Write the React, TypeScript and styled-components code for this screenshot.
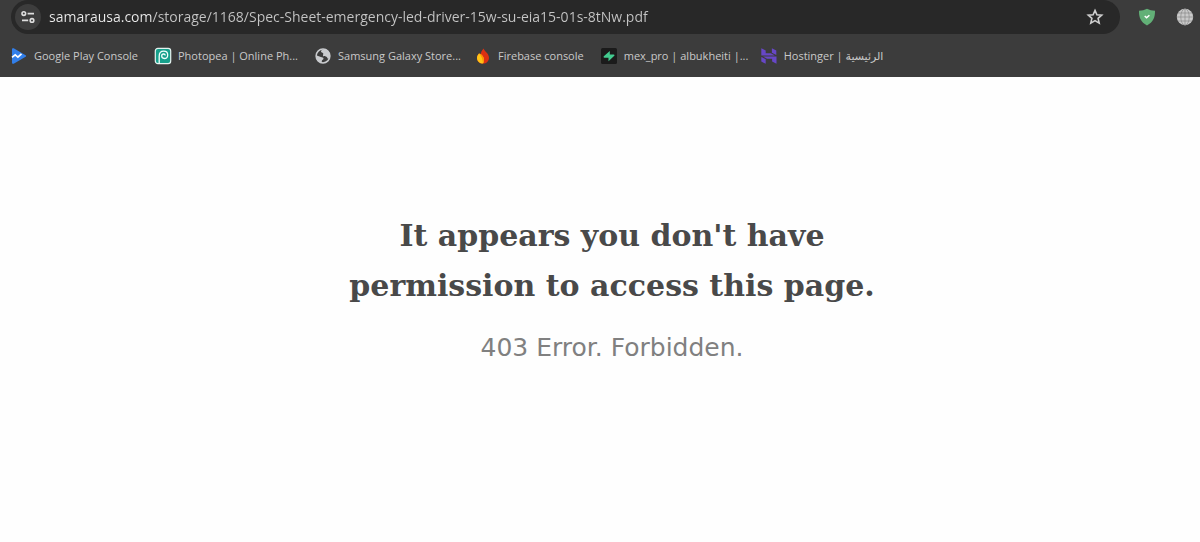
import React from "react";
import styled, { createGlobalStyle } from "styled-components";

const GlobalStyle = createGlobalStyle`
  * { box-sizing: border-box; }
  body { margin: 0; background: #fefefe; }
`;

const uiFont = `"Open Sans", "Noto Sans", "DejaVu Sans", sans-serif`;

const Chrome = styled.header`
  background: #3c3c3c;
  font-family: ${uiFont};
  padding-bottom: 9px;
`;

const Toolbar = styled.div`
  display: flex;
  align-items: center;
  padding-left: 11px;
  padding-right: 5px;
`;

const AddressBar = styled.form`
  flex: 1;
  min-width: 0;
  display: flex;
  align-items: center;
  height: 34px;
  padding: 0 16px 0 4px;
  border-radius: 17px;
  background: #282828;
`;

const IconButton = styled.button<{ $size: number; $fill?: string }>`
  display: grid;
  place-items: center;
  flex: none;
  width: ${(p) => p.$size}px;
  height: ${(p) => p.$size}px;
  padding: 0;
  border: 0;
  border-radius: 50%;
  background: ${(p) => p.$fill ?? "transparent"};
  cursor: pointer;
`;

const UrlInput = styled.input`
  flex: 1;
  min-width: 0;
  height: 24px;
  margin-left: 8px;
  padding: 0;
  border: 0;
  outline: 0;
  font: 14px/24px ${uiFont};
  color: transparent;
  background: linear-gradient(90deg, #ededed 103px, #c6c6c6 103px);
  background-clip: text;
  -webkit-background-clip: text;
  caret-color: #ededed;
`;

const Extensions = styled.div`
  display: flex;
  gap: 18px;
  margin-left: 17px;
`;

const Bookmarks = styled.nav`
  display: flex;
  align-items: center;
  height: 34px;
  padding: 9px 0 0 10px;
  gap: 16px;
`;

const Bookmark = styled.a<{ $truncated?: boolean }>`
  display: flex;
  align-items: center;
  gap: 6px;
  flex: none;
  width: ${(p) => (p.$truncated ? "144px" : "auto")};
  height: 24px;
  font-size: 11px;
  line-height: 24px;
  white-space: nowrap;
  color: #c9c9c9;
  text-decoration: none;
  svg { flex: none; }
`;

const Message = styled.main`
  padding: 134px 0 0 24px;
  text-align: center;
`;

const Title = styled.h1`
  max-width: 600px;
  margin: 0 auto;
  font: bold 30px/50px "DejaVu Serif", serif;
  color: #494949;
`;

const Detail = styled.p`
  margin: 17px 0 0;
  font: 25px/40px "DejaVu Sans", sans-serif;
  color: #808080;
`;

const TuneIcon = () => (
  <svg width="14" height="14" viewBox="0 0 14 14" fill="none" stroke="#dedede" strokeWidth="1.6">
    <circle cx="2.8" cy="3.6" r="1.8" />
    <path d="M6.6 3.6H13M1 10.4h6.2" />
    <circle cx="11" cy="10.4" r="1.8" />
  </svg>
);

const StarIcon = () => (
  <svg width="18" height="18" viewBox="0 0 18 18" fill="none" stroke="#cfcfcf" strokeWidth="1.6">
    <path d="M9 2.4l1.9 4.4 4.8.4-3.6 3.2 1.1 4.7L9 12.6l-4.2 2.5 1.1-4.7-3.6-3.2 4.8-.4z" />
  </svg>
);

const ShieldIcon = () => (
  <svg width="18" height="18" viewBox="0 0 18 18">
    <path d="M9 .8c2.400 1.200 5 1.800 8 2 .2 6.500-1.800 11.500-8 14.600C2.800 14.300.8 9.300 1 2.800c3-.2 5.600-.8 8-2z" fill="#62b077" />
    <path d="M6.700 8l1.900 1.800 2.800-2.600" fill="none" stroke="#fff" strokeWidth="1.500" />
  </svg>
);

const GridGlobeIcon = () => (
  <svg width="18" height="18" viewBox="0 0 18 18">
    <circle cx="9" cy="9" r="8.200" fill="#cacaca" />
    <g fill="none" stroke="#8a8a8a" strokeWidth=".7">
      <path d="M9 1v16M1 9h16M2 5h14M2 13h14" />
      <ellipse cx="9" cy="9" rx="4.200" ry="8.200" />
    </g>
  </svg>
);

const PlayConsoleIcon = () => (
  <svg width="18" height="18" viewBox="0 0 18 18">
    <path d="M2 2.200c0-.9.900-1.300 1.700-.9L15.600 8.200c.7.400.7 1.200 0 1.600L3.700 16.700c-.8.400-1.700 0-1.700-.9z" fill="#327fea" />
    <path d="M2 10.300l3.200-2.500 2.700 2.400 3.600-3.400" fill="none" stroke="#fff" strokeWidth="1.700" />
  </svg>
);

const PhotopeaIcon = () => (
  <svg width="18" height="18" viewBox="0 0 18 18">
    <rect x="1.300" y="1.300" width="15.400" height="15.400" rx="2.600" fill="#16a08b" stroke="#e4f3f0" strokeWidth="1.200" />
    <path d="M5.200 16.400V9.200C5.200 6 7.300 4.200 9.700 4.200c2.300 0 4 1.600 4 3.800 0 2.100-1.500 3.500-3.400 3.500-1.500 0-2.600-1-2.600-2.400 0-1.200.9-2.100 2-2.100.9 0 1.500.600 1.500 1.400" fill="none" stroke="#f2fffc" strokeWidth="1.300" />
  </svg>
);

const GlobeIcon = () => (
  <svg width="18" height="18" viewBox="0 0 18 18">
    <circle cx="9" cy="9" r="6.900" fill="#3c3c3c" stroke="#c9cbce" strokeWidth="1.500" />
    <path d="M2.200 8.200l4.600 1.700c1.300.5 2.600.3 2.700 1.500.1 1.300-1.600 1.300-1.700 2.600l-.2 1.900C4.500 15.300 2 12.500 2.200 8.200z" fill="#c9cbce" />
    <path d="M10.300 2c-2 .5-3.400 1.300-3.300 2.600.1 1.300 2 .9 2.300 2 .2 1-.8 1.400-.1 2.300.8 1 2.300.2 3.300.9.900.6.600 1.700 1.700 2 1.200.2 1.800-1.400 1.800-2.800C16 5.300 13.600 2.600 10.300 2z" fill="#c9cbce" />
  </svg>
);

const FirebaseIcon = () => (
  <svg width="18" height="18" viewBox="0 0 18 18">
    <path d="M9.700 1.500c.4 2.500 5.300 5 5.300 9.200 0 3.400-2.600 5.900-6 5.900s-6-2.500-6-5.600c0-1.900.8-3.300 2-4.400.5.8 1 1.200 1.700 1.400C6.700 5.500 7.700 3.200 9.700 1.500z" fill="#dc3012" />
    <path d="M5 6.600c3 1 5.200 3.700 4.900 7.300-.1 1.100-.4 2-.9 2.700-3.400 0-6-2.500-6-5.600 0-1.900.8-3.300 2-4.400z" fill="#ffc417" />
    <path d="M5 6.600c3.400.500 6.600 4.600 4 10-.3-4.300-1.200-7.200-4-10z" fill="#ff9100" />
  </svg>
);

const SupabaseIcon = () => (
  <svg width="18" height="18" viewBox="0 0 18 18">
    <rect x="1" y="1" width="16" height="16" rx="1.500" fill="#1b1b1b" />
    <path d="M9.800 4.100v3.300h3.900c.8 0 1.100.8.6 1.400l-5.800 5.400v-3.500H4.400c-.8 0-1.100-.8-.6-1.400z" fill="#43cb8f" />
  </svg>
);

const HostingerIcon = () => (
  <svg width="18" height="18" viewBox="0 0 18 18" fill="#6747c7">
    <path d="M1.300 8.400V1.200l4.400 2.200v2.800l5.100.1 4 2.100z" />
    <path d="M11.900 5.800V1.200l4.400 2.200v4.700z" />
    <path d="M16.500 9.600v7.200l-4.400-2.200v-2.800l-5.100-.1-4-2.100z" />
    <path d="M1.300 9.900l4.400 2.300v4.600l-4.400-2.200z" />
  </svg>
);

const bookmarks = [
  { label: "Google Play Console", Icon: PlayConsoleIcon },
  { label: "Photopea | Online Ph...", Icon: PhotopeaIcon, truncated: true },
  { label: "Samsung Galaxy Store...", Icon: GlobeIcon, truncated: true },
  { label: "Firebase console", Icon: FirebaseIcon },
  { label: "mex_pro | albukheiti |...", Icon: SupabaseIcon, truncated: true },
  { label: "Hostinger | الرئيسية", Icon: HostingerIcon },
];

export default function App() {
  return (
    <>
      <GlobalStyle />
      <Chrome>
        <Toolbar>
          <AddressBar onSubmit={(e) => e.preventDefault()}>
            <IconButton type="button" $size={26} $fill="#3d3d3d" aria-label="Site information">
              <TuneIcon />
            </IconButton>
            <UrlInput
              aria-label="Address"
              defaultValue="samarausa.com/storage/1168/Spec-Sheet-emergency-led-driver-15w-su-eia15-01s-8tNw.pdf"
            />
            <IconButton type="button" $size={18} aria-label="Bookmark this page">
              <StarIcon />
            </IconButton>
          </AddressBar>
          <Extensions>
            <IconButton type="button" $size={20} aria-label="Protection">
              <ShieldIcon />
            </IconButton>
            <IconButton type="button" $size={20} aria-label="Web extension">
              <GridGlobeIcon />
            </IconButton>
          </Extensions>
        </Toolbar>
        <Bookmarks>
          {bookmarks.map(({ label, Icon, truncated }) => (
            <Bookmark href="#" key={label} $truncated={truncated}>
              <Icon />
              {label}
            </Bookmark>
          ))}
        </Bookmarks>
      </Chrome>
      <Message>
        <Title>It appears you don't have permission to access this page.</Title>
        <Detail>403 Error. Forbidden.</Detail>
      </Message>
    </>
  );
}
